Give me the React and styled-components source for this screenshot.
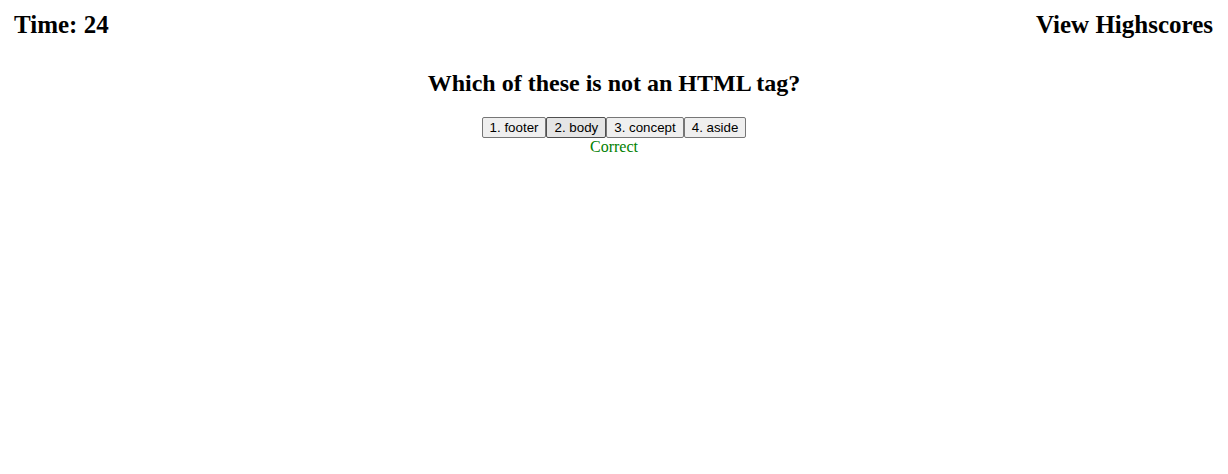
import React from "react";
import styled, { createGlobalStyle } from "styled-components";

const Global = createGlobalStyle`
  html, body { margin: 0; padding: 0; background: #fff; }
  body { font-family: "Liberation Serif", "Times New Roman", serif; color: #000; }
`;

const Header = styled.header`
  display: flex;
  justify-content: space-between;
  align-items: flex-start;
  padding: 11px 15px 0 14px;
`;

const Title = styled.h2`
  margin: 0;
  font-size: 25px;
  font-weight: bold;
  line-height: normal;
`;

const Main = styled.main`
  display: flex;
  flex-direction: column;
  align-items: center;
  padding-top: 31px;
`;

const Question = styled.h2`
  margin: 0 0 20px;
  font-size: 24px;
  font-weight: bold;
  line-height: normal;
`;

const Choices = styled.div`
  display: flex;
`;

const Choice = styled.button`
  font-family: "Liberation Sans", Arial, sans-serif;
  font-size: 13.333px;
  line-height: normal;
  padding: 1px 7px;
  margin: 0;
  border: 1px solid ${(p) => (p.$hover ? "#4f4f4f" : "#767676")};
  border-radius: 2px;
  background: ${(p) => (p.$hover ? "#e5e5e5" : "#efefef")};
  color: #000;
  height: 21px;
`;

const Feedback = styled.div`
  font-size: 16px;
  color: green;
  line-height: normal;
`;

export default function App() {
  const choices = ["1. footer", "2. body", "3. concept", "4. aside"];
  return (
    <>
      <Global />
      <Header>
        <Title>Time: 24</Title>
        <Title>View Highscores</Title>
      </Header>
      <Main>
        <Question>Which of these is not an HTML tag?</Question>
        <Choices>
          {choices.map((c, i) => (
            <Choice key={c} $hover={i === 1}>{c}</Choice>
          ))}
        </Choices>
        <Feedback>Correct</Feedback>
      </Main>
    </>
  );
}
